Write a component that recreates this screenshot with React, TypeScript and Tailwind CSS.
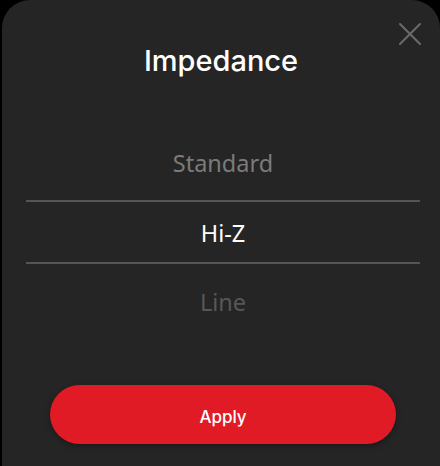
import { X } from "lucide-react";

// Wheel-style picker: the selected row sits between the two rules,
// the neighbours get a little more room so their text sits farther out.
const OPTIONS = [
  { label: "Standard", tone: "text-[#7b7b7b]", row: "h-[72px]" },
  { label: "Hi-Z", tone: "text-white", row: "h-[60px] pt-[3px]" },
  { label: "Line", tone: "text-[#575757]", row: "h-[78px]" },
];

export default function App() {
  return (
    <div className="h-[466px] w-[440px] bg-black pl-[2px]">
      <div className="relative flex h-full flex-col rounded-t-[28px] bg-[#252525]">
        <button type="button" className="absolute right-[10px] top-[14px] text-[#6a6a6a]">
          <X size={40} strokeWidth={1.25} />
        </button>

        <h1 className="pt-[43px] text-center text-[29px] font-medium leading-[36px] text-white [font-family:Inter,'Noto_Sans',sans-serif]">
          Impedance
        </h1>

        <div className="ml-[24px] mr-[20px] mt-[49px] flex flex-col [font-family:'Noto_Sans',sans-serif]">
          {OPTIONS.map((o, i) => (
            <div key={o.label}>
              {i > 0 && <div className="h-[2px] bg-[#555555]" />}
              <div className={`flex items-center justify-center text-[23.5px] ${o.row} ${o.tone}`}>{o.label}</div>
            </div>
          ))}
        </div>

        <div className="mt-auto pb-[22px] pl-[48px] pr-[44px]">
          <button
            type="button"
            className="h-[59px] w-full rounded-full bg-[#e11b26] pt-[6px] text-[17px] font-medium text-white shadow-[0_2px_6px_rgba(0,0,0,0.35)] [font-family:Inter,sans-serif]"
          >
            Apply
          </button>
        </div>
      </div>
    </div>
  );
}
